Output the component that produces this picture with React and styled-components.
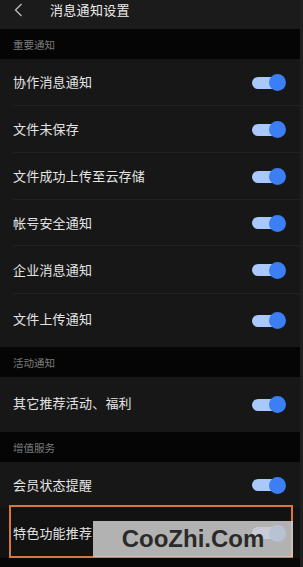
import React from "react";
import styled, { createGlobalStyle } from "styled-components";

const GlobalStyle = createGlobalStyle`
  body {
    margin: 0;
    background: #000;
    font-family: "Noto Sans CJK SC", "Noto Sans", sans-serif;
  }
`;

const Screen = styled.div`
  width: 303px;
  height: 567px;
  overflow: hidden;
  display: flex;
  flex-direction: column;
  background: #050505;
  position: relative;
  border-right: 3px solid #1f1f1f;
  box-sizing: border-box;
`;

const Header = styled.div`
  height: 29px;
  flex-shrink: 0;
  display: flex;
  align-items: center;
  background: #1b1b1b;
  color: #ececec;
  font-size: 13px;
`;

const BackButton = styled.div`
  width: 50px;
  height: 20px;
  display: flex;
  align-items: center;
  padding-left: 14px;
  box-sizing: border-box;
  margin-top: -9px;
`;

const Title = styled.span`
  margin-top: -10px;
  letter-spacing: 0.3px;
`;

const SectionLabel = styled.div`
  height: 30px;
  flex-shrink: 0;
  display: flex;
  align-items: center;
  padding-left: 13px;
  font-size: 10.5px;
  color: #7c7c7c;
  background: #050505;
`;

const Row = styled.div`
  height: ${(p) => p.h}px;
  flex-shrink: 0;
  display: flex;
  align-items: center;
  justify-content: space-between;
  padding: 0 14px 0 13px;
  background: #171717;
  position: relative;
  box-sizing: border-box;
  &::after {
    content: "";
    display: ${(p) => (p.divider ? "block" : "none")};
    position: absolute;
    left: 13px;
    right: 0;
    bottom: 0;
    height: 1px;
    background: #212121;
  }
`;

const Label = styled.span`
  font-size: 13px;
  line-height: 1;
  margin-top: ${(p) => p.lift || -2}px;
  color: #e4e4e4;
  letter-spacing: 0.2px;
`;

const Toggle = styled.div`
  width: 34px;
  height: 17px;
  position: relative;
  flex-shrink: 0;
`;

const Track = styled.div`
  position: absolute;
  left: 0;
  right: 4px;
  top: 2.5px;
  height: 12px;
  border-radius: 6px;
  background: #a9c8fb;
`;

const Knob = styled.div`
  position: absolute;
  right: 0;
  top: 0;
  width: 17px;
  height: 17px;
  border-radius: 50%;
  background: #3c7ef3;
`;

const HighlightRow = styled(Row)`
  background: #121212;
  &::before {
    content: "";
    position: absolute;
    left: 9px;
    right: 7px;
    top: -3px;
    bottom: 0;
    border: 2px solid #d9763c;
    pointer-events: none;
  }
`;

const Watermark = styled.div`
  position: absolute;
  left: 93px;
  top: 521px;
  width: 200px;
  height: 36px;
  background: rgba(205, 205, 205, 0.86);
  display: flex;
  align-items: center;
  justify-content: center;
  font-family: "Liberation Sans", Arial, sans-serif;
  font-weight: bold;
  font-size: 24px;
  color: #2a2a2a;
`;

const Filler = styled.div`
  flex: 1;
  background: #070707;
`;

function Switch() {
  return (
    <Toggle>
      <Track />
      <Knob />
    </Toggle>
  );
}

const important = [
  { text: "协作消息通知", h: 47 },
  { text: "文件未保存", h: 47 },
  { text: "文件成功上传至云存储", h: 47 },
  { text: "帐号安全通知", h: 46 },
  { text: "企业消息通知", h: 48 },
  { text: "文件上传通知", h: 53 },
];

export default function App() {
  return (
    <>
      <GlobalStyle />
      <Screen>
        <Header>
          <BackButton>
            <svg width="9" height="14" viewBox="0 0 9 14">
              <path d="M7.5 1 L1.5 7 L7.5 13" fill="none" stroke="#bdbdbd" strokeWidth="1.3" />
            </svg>
          </BackButton>
          <Title>消息通知设置</Title>
        </Header>

        <SectionLabel>重要通知</SectionLabel>
        {important.map((item, i) => (
          <Row key={item.text} h={item.h} divider={i < important.length - 1}>
            <Label lift={i === important.length - 1 ? -5 : -2}>{item.text}</Label>
            <Switch />
          </Row>
        ))}

        <SectionLabel>活动通知</SectionLabel>
        <Row h={55}>
          <Label lift={-4}>其它推荐活动、福利</Label>
          <Switch />
        </Row>

        <SectionLabel>增值服务</SectionLabel>
        <Row h={46}>
          <Label>会员状态提醒</Label>
          <Switch />
        </Row>
        <HighlightRow h={50}>
          <Label>特色功能推荐</Label>
          <Switch />
        </HighlightRow>
        <Filler />

        <Watermark>CooZhi.Com</Watermark>
      </Screen>
    </>
  );
}
